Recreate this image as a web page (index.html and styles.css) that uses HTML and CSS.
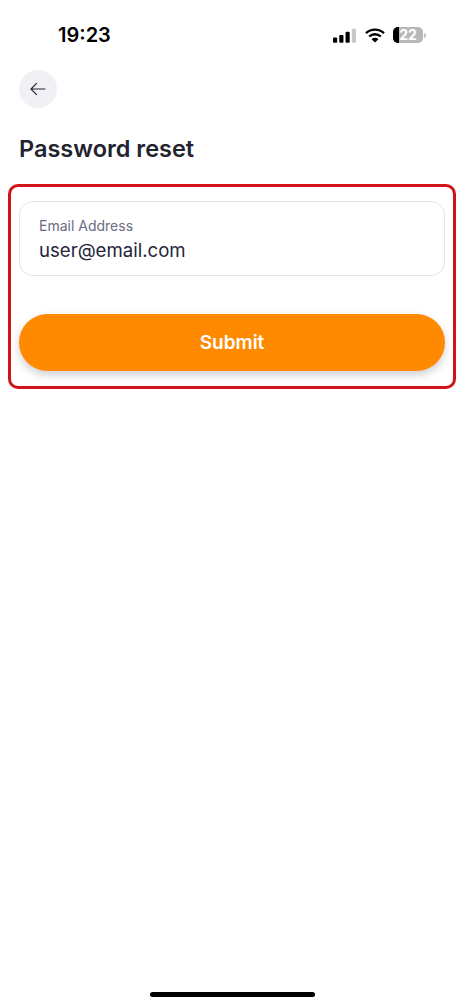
FILE: index.html
```html
<!DOCTYPE html>
<html lang="en">
<head>
<meta charset="utf-8">
<title>Password reset</title>
<link rel="stylesheet" href="styles.css">
</head>
<body>
<div class="screen">
  <header class="status">
    <span class="time">19:23</span>
    <div class="status-icons">
      <svg class="signal" width="23" height="15" viewBox="1 0 22 14">
        <rect x="1" y="9" width="4" height="5" rx="1" fill="#000"/>
        <rect x="7" y="6.5" width="4" height="7.5" rx="1" fill="#000"/>
        <rect x="13" y="3.5" width="4" height="10.5" rx="1" fill="#000"/>
        <rect x="19" y="0.5" width="4" height="13.5" rx="1" fill="#c8c8c8"/>
      </svg>
      <svg class="wifi" width="20" height="15" viewBox="0 0 20 15">
        <path d="M1 5.2a13 13 0 0 1 18 0" fill="none" stroke="#000" stroke-width="2.4"/>
        <path d="M4.2 8.5a8.4 8.4 0 0 1 11.6 0" fill="none" stroke="#000" stroke-width="2.4"/>
        <path d="M10 14.6 6.6 11.2a4.8 4.8 0 0 1 6.8 0z" fill="#000"/>
      </svg>
      <div class="battery">
        <div class="battery-body"><span class="battery-level"></span><span class="battery-text">22</span></div>
        <span class="battery-cap"></span>
      </div>
    </div>
  </header>
  <button class="back" type="button" aria-label="Back">
    <svg width="16" height="14" viewBox="0 0 16 14">
      <path d="M15.5 7H1M6.8 1.2 1 7l5.8 5.8" fill="none" stroke="#25253a" stroke-width="1.2"/>
    </svg>
  </button>
  <h1 class="title">Password reset</h1>
  <form class="highlight">
    <div class="field">
      <span class="field-label">Email Address</span>
      <span class="field-value">user@email.com</span>
    </div>
    <button class="submit" type="button">Submit</button>
  </form>
  <div class="spacer"></div>
  <div class="home-bar"></div>
</div>
</body>
</html>
```
FILE: styles.css
```css
* { box-sizing: border-box; }
html, body { margin: 0; padding: 0; background: #fff; }
body { font-family: Inter, "Liberation Sans", sans-serif; }
.screen {
  width: 464px;
  height: 1006px;
  display: flex;
  flex-direction: column;
  overflow: hidden;
}
.status {
  height: 70px;
  flex: none;
  display: flex;
  justify-content: space-between;
  align-items: flex-start;
  padding: 22px 38px 0 58px;
}
.time {
  font-size: 20px;
  line-height: 26px;
  font-weight: 600;
  color: #000;
}
.status-icons {
  display: flex;
  align-items: center;
  gap: 8px;
  padding-top: 5px;
}
.signal { margin-right: 1px; }
.battery { display: flex; align-items: center; gap: 1px; }
.battery-body {
  position: relative;
  width: 30px;
  height: 16px;
  border-radius: 5px;
  background: #b8b8b8;
  overflow: hidden;
  display: flex;
  align-items: center;
  justify-content: center;
}
.battery-level {
  position: absolute;
  left: 0;
  top: 0;
  bottom: 0;
  width: 6px;
  background: #000;
}
.battery-text {
  position: relative;
  font-size: 14px;
  font-weight: 700;
  color: #fff;
  line-height: 16px;
}
.battery-cap {
  width: 2px;
  height: 5px;
  border-radius: 0 2px 2px 0;
  background: #c4c4c4;
}
.back {
  flex: none;
  width: 38px;
  height: 38px;
  margin-left: 19px;
  padding: 0;
  border: 0;
  border-radius: 50%;
  background: #f1f0f5;
  display: flex;
  align-items: center;
  justify-content: center;
}
.title {
  margin: 26px 0 0 19px;
  font-size: 23.5px;
  line-height: 30px;
  font-weight: 600;
  color: #23232f;
}
.highlight {
  flex: none;
  margin: 20px 8px 0;
  padding: 14px 8px 15px;
  height: 205px;
  border: 3px solid #d0141a;
  border-radius: 10px;
  display: flex;
  flex-direction: column;
  gap: 38px;
}
.field {
  height: 75px;
  flex: none;
  border: 1px solid #e2e2ea;
  border-radius: 14px;
  padding: 14px 19px 0;
  display: flex;
  flex-direction: column;
}
.field-label {
  font-size: 14px;
  line-height: 20px;
  color: #6b6b85;
}
.field-value {
  margin-top: 1px;
  font-size: 18.6px;
  line-height: 26px;
  color: #25253a;
}
.submit {
  height: 57px;
  flex: none;
  border: 0;
  border-radius: 29px;
  background: #ff8a00;
  color: #fff;
  font-family: inherit;
  font-size: 19px;
  font-weight: 600;
  box-shadow: 0 4px 8px rgba(40, 40, 60, 0.22);
}
.spacer { flex: 1; }
.home-bar {
  flex: none;
  width: 165px;
  height: 5px;
  margin: 0 auto 9px;
  border-radius: 3px;
  background: #000;
}
```
